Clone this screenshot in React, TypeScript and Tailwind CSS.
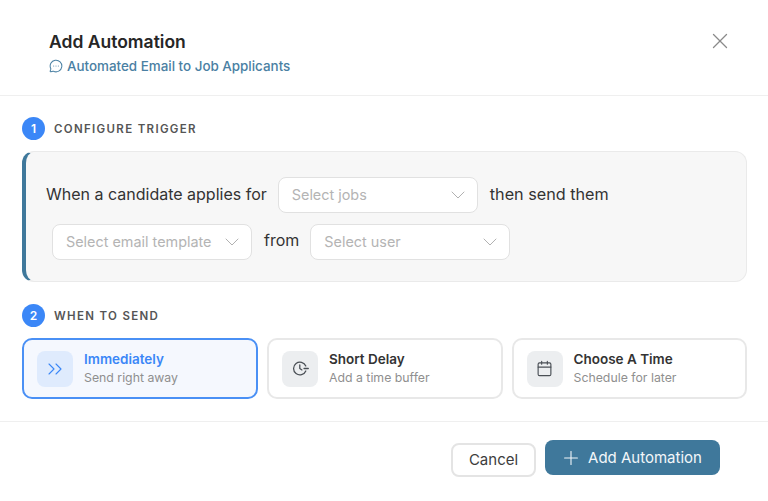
import { ChevronDown, ChevronsRight, Calendar, Plus, X, MessageCircleMore } from "lucide-react";

const SelectBox = ({ label }: { label: string }) => (
  <div className="flex h-[36px] w-[200px] items-center justify-between rounded-lg border border-[#e1e1e1] bg-white pl-[13px] pr-[7px]">
    <span className="text-[14.4px] text-[#b4b4b4]">{label}</span>
    <ChevronDown className="h-[24px] w-[24px] text-[#a8a8a8]" strokeWidth={0.9} />
  </div>
);

const StepHeading = ({ step, title }: { step: number; title: string }) => (
  <div className="flex items-center gap-[9px]">
    <div className="flex h-[23px] w-[23px] items-center justify-center rounded-full bg-[#3b87f7] text-[12px] font-semibold text-white">
      {step}
    </div>
    <h3 className="mt-[2px] text-[11.5px] font-semibold tracking-[0.115em] text-[#555555]">{title}</h3>
  </div>
);

// Clock with a small dash on its right side, not in the icon packs
const DelayIcon = () => (
  <svg className="h-[17px] w-[17px] text-[#4a4f55]" viewBox="0 0 24 24" fill="none" stroke="currentColor" strokeWidth="1.8" strokeLinecap="round" strokeLinejoin="round">
    <path d="M19.5 8.5A9 9 0 1 0 19.5 15.5" />
    <path d="M11 7v5l3 2" />
    <path d="M17 12h6" />
  </svg>
);

const OptionCard = ({ icon, title, subtitle, active }: { icon: React.ReactNode; title: string; subtitle: string; active?: boolean }) => (
  <div
    className={`flex h-[61px] items-center gap-[11px] rounded-[10px] px-[13px] ${
      active ? "w-[236px] shrink-0 border-2 border-[#4a90f5] bg-[#f5f8fe]" : "flex-1 border-2 border-[#e8e8e8] bg-white"
    }`}
  >
    <div className={`flex h-[36px] w-[36px] shrink-0 items-center justify-center rounded-lg ${active ? "bg-[#dfebfd]" : "bg-[#eceef0]"}`}>
      {icon}
    </div>
    <div className="flex flex-col">
      <span className={`text-[13.5px] font-semibold leading-[19px] ${active ? "text-[#3b87f7]" : "text-[#333333]"}`}>{title}</span>
      <span className="text-[12.3px] leading-[18px] text-[#8f8f8f]">{subtitle}</span>
    </div>
  </div>
);

export default function App() {
  return (
    <div className="flex h-[501px] w-[768px] flex-col overflow-hidden bg-white font-['Inter',sans-serif]">
      {/* Header */}
      <div className="flex h-[96px] shrink-0 items-start justify-between border-b border-[#efefef] pl-[49px] pr-[35px] pt-[30px]">
        <div>
          <h2 className="text-[17.5px] font-semibold leading-[23px] text-[#262626]">Add Automation</h2>
          <div className="mt-[4px] flex items-center gap-[4px] text-[13.4px] font-medium leading-[18px] text-[#4a80a3]">
            <MessageCircleMore className="h-[14px] w-[14px]" strokeWidth={1.75} />
            <span>Automated Email to Job Applicants</span>
          </div>
        </div>
        <button className="-mt-[2px] text-[#8a8a8a]">
          <X className="h-[26px] w-[26px]" strokeWidth={1.2} />
        </button>
      </div>

      {/* Body */}
      <div className="flex h-[326px] shrink-0 flex-col border-b border-[#efefef] px-[21px] pt-[21px]">
        <div className="ml-[1px] h-[23px]">
          <StepHeading step={1} title="CONFIGURE TRIGGER" />
        </div>
        <div className="ml-[1px] mt-[11px] flex h-[131px] flex-col gap-[11px] rounded-xl border border-l-4 border-[#eaeaea] border-l-[#3f789b] bg-[#f7f7f7] pl-[20px] pt-[25px]">
          <div className="flex items-center text-[16px] text-[#333333]">
            <span className="mr-[11px] pb-[3px]">When a candidate applies for</span>
            <SelectBox label="Select jobs" />
            <span className="ml-[12px] pb-[2px] text-[16.2px]">then send them</span>
          </div>
          <div className="ml-[6px] flex items-center text-[16px] text-[#333333]">
            <SelectBox label="Select email template" />
            <span className="ml-[12px] mr-[11px] pb-[5px]">from</span>
            <SelectBox label="Select user" />
          </div>
        </div>

        <div className="ml-[1px] mt-[22px]">
          <StepHeading step={2} title="WHEN TO SEND" />
        </div>
        <div className="ml-[1px] mt-[11px] flex gap-[9px]">
          <OptionCard
            active
            icon={<ChevronsRight className="h-[24px] w-[24px] text-[#3b87f7]" strokeWidth={1.1} />}
            title="Immediately"
            subtitle="Send right away"
          />
          <OptionCard icon={<DelayIcon />} title="Short Delay" subtitle="Add a time buffer" />
          <OptionCard
            icon={<Calendar className="h-[17px] w-[17px] text-[#4a4f55]" strokeWidth={1.6} />}
            title="Choose A Time"
            subtitle="Schedule for later"
          />
        </div>
      </div>

      {/* Footer */}
      <div className="flex items-start justify-end gap-[9px] pr-[48px] pt-[18px]">
        <button className="mt-[3px] flex h-[34px] w-[85px] items-center justify-center rounded-lg border-2 border-[#e4e4e4] bg-white text-[15px] text-[#3d3d3d]">
          Cancel
        </button>
        <button className="flex h-[35px] w-[175px] items-center justify-center gap-[6px] rounded-lg bg-[#3f789b] pr-[3px] pt-[1px] text-[15px] font-normal text-[#f2f6f9]">
          <Plus className="h-[22px] w-[22px]" strokeWidth={1.2} />
          Add Automation
        </button>
      </div>
    </div>
  );
}
